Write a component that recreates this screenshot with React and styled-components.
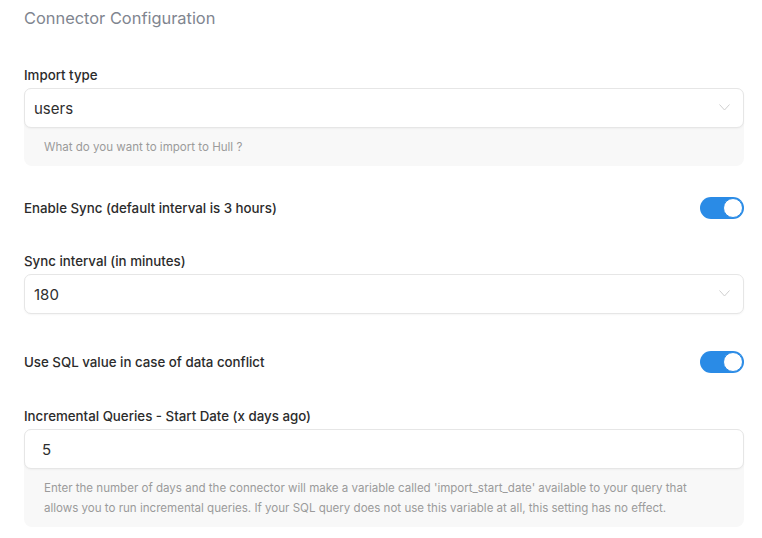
import React from "react";
import styled, { createGlobalStyle } from "styled-components";

const GlobalStyle = createGlobalStyle`
  body {
    margin: 0;
    background: #ffffff;
    font-family: Inter, "Liberation Sans", sans-serif;
    -webkit-font-smoothing: antialiased;
  }
`;

const Page = styled.div`
  width: 720px;
  padding: 8px 18px 0 24px;
`;

const Title = styled.h2`
  margin: 0;
  font-size: 16.4px;
  line-height: 20px;
  font-weight: 400;
  color: #80858f;
`;

const Section = styled.div`
  margin-top: ${(props) => props.$top}px;
`;

const Label = styled.div`
  font-size: 13.3px;
  line-height: 16px;
  font-weight: 500;
  color: #2b2b2b;
  margin-bottom: ${(props) => (props.$inline ? 0 : 5)}px;
`;

const Well = styled.div`
  background: #f8f8f8;
  border-radius: 8px;
`;

const InputBox = styled.div`
  position: relative;
  height: 40px;
  box-sizing: border-box;
  display: flex;
  align-items: center;
  padding: 0 ${(props) => (props.$text ? 17 : 9)}px;
  background: #ffffff;
  border: 1px solid #e6e6e6;
  border-radius: 7px;
  box-shadow: 0 1px 2px rgba(0, 0, 0, 0.04);
  font-size: 15px;
  color: #2e2e2e;
`;

const Chevron = styled.svg`
  position: absolute;
  right: 13px;
  top: 15px;
`;

const Help = styled.div`
  padding: 9px 40px 9px 20px;
  font-size: 11.55px;
  line-height: 20px;
  color: #9b9b9b;
`;

const ToggleRow = styled.div`
  display: flex;
  align-items: center;
  justify-content: space-between;
  height: 22px;
`;

const Toggle = styled.div`
  width: 44px;
  height: 22px;
  box-sizing: border-box;
  border-radius: 11px;
  background: ${(props) => (props.$on ? "#2a8be6" : "#d8d8d8")};
  position: relative;
`;

const Knob = styled.div`
  position: absolute;
  top: 1px;
  right: ${(props) => (props.$on ? 1 : 23)}px;
  width: 20px;
  height: 20px;
  box-sizing: border-box;
  border-radius: 50%;
  background: #ffffff;
  border: 1.5px solid #2a8be6;
`;

const Select = ({ value }) => (
  <InputBox>
    {value}
    <Chevron width="11" height="7" viewBox="0 0 11 7">
      <polyline points="0.5 0.5 5.5 6 10.5 0.5" fill="none" stroke="#cfcfcf" strokeWidth="1" />
    </Chevron>
  </InputBox>
);

const Switch = ({ on }) => (
  <Toggle $on={on}>
    <Knob $on={on} />
  </Toggle>
);

export default function App() {
  return (
    <Page>
      <GlobalStyle />
      <Title>Connector Configuration</Title>

      <Section $top={39}>
        <Label>Import type</Label>
        <Well>
          <Select value="users" />
          <Help>What do you want to import to Hull ?</Help>
        </Well>
      </Section>

      <Section $top={31}>
        <ToggleRow>
          <Label $inline>Enable Sync (default interval is 3 hours)</Label>
          <Switch on />
        </ToggleRow>
      </Section>

      <Section $top={34}>
        <Label>Sync interval (in minutes)</Label>
        <Select value="180" />
      </Section>

      <Section $top={37}>
        <ToggleRow>
          <Label $inline>Use SQL value in case of data conflict</Label>
          <Switch on />
        </ToggleRow>
      </Section>

      <Section $top={35}>
        <Label>Incremental Queries - Start Date (x days ago)</Label>
        <Well>
          <InputBox $text>5</InputBox>
          <Help>
            Enter the number of days and the connector will make a variable called 'import_start_date' available to your query that
            allows you to run incremental queries. If your SQL query does not use this variable at all, this setting has no effect.
          </Help>
        </Well>
      </Section>
    </Page>
  );
}
